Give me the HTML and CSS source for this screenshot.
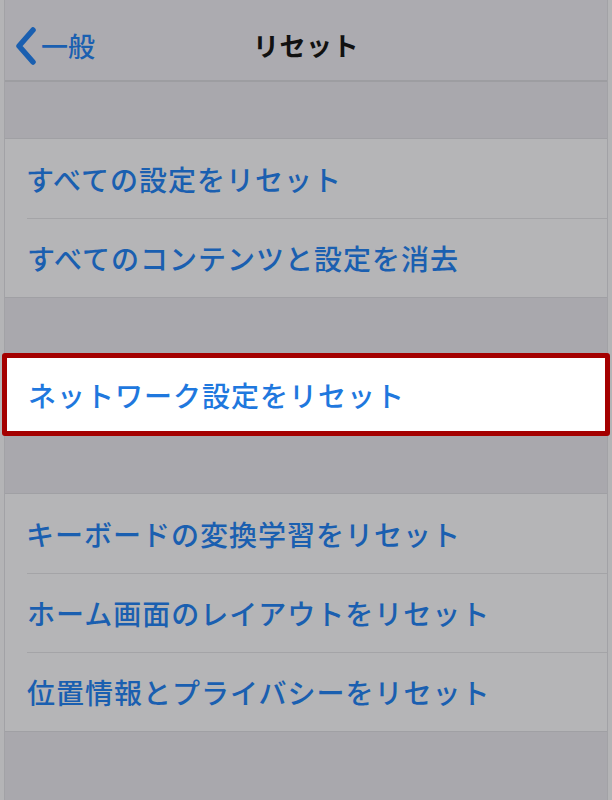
FILE: index.html
```html
<!DOCTYPE html>
<html lang="ja">
<head>
    <meta charset="UTF-8">
    <meta name="viewport" content="width=device-width, initial-scale=1.0">
    <title>リセット</title>
    <link rel="stylesheet" href="styles.css">
</head>
<body>
    <div class="screen">
        <div class="navbar">
            <div class="back">
                <svg class="chevron" width="24" height="38" viewBox="0 0 24 38">
                    <path d="M19 3 L5 19 L19 35" fill="none" stroke="#1a5fb0" stroke-width="5.5" stroke-linecap="round" stroke-linejoin="round"/>
                </svg>
                <span>一般</span>
            </div>
            <div class="nav-title">リセット</div>
        </div>
        <div class="spacer first"></div>
        <div class="group">
            <div class="row">すべての設定をリセット</div>
            <div class="row">すべてのコンテンツと設定を消去</div>
        </div>
        <div class="spacer"></div>
        <div class="highlight">
            <div class="row">ネットワーク設定をリセット</div>
        </div>
        <div class="spacer"></div>
        <div class="group">
            <div class="row">キーボードの変換学習をリセット</div>
            <div class="row">ホーム画面のレイアウトをリセット</div>
            <div class="row">位置情報とプライバシーをリセット</div>
        </div>
    </div>
</body>
</html>
```

FILE: styles.css
```css
* {
    margin: 0;
    padding: 0;
    box-sizing: border-box;
}
body {
    font-family: "Noto Sans CJK JP", "Noto Sans", sans-serif;
    background-color: #b4b4b6;
    width: 612px;
    height: 800px;
    overflow: hidden;
}
.screen {
    margin: 0 4px;
    height: 800px;
    background-color: #a9a8ad;
    border-left: 1px solid #a2a2a6;
    border-right: 1px solid #a2a2a6;
}
.navbar {
    position: relative;
    height: 82px;
    background-color: #acabb0;
    border-bottom: 2px solid #9d9da1;
    display: flex;
    align-items: center;
    justify-content: center;
}
.back {
    position: absolute;
    left: 9px;
    top: 26px;
    display: flex;
    align-items: center;
    gap: 3px;
    color: #1a5fb0;
    font-size: 27px;
    font-weight: 500;
}
.nav-title {
    font-size: 26px;
    font-weight: 700;
    letter-spacing: 0.5px;
    color: #111;
    margin-top: 8px;
}
.spacer {
    height: 55px;
}
.spacer.first {
    height: 56px;
}
.group {
    background-color: #b5b5b7;
    border-top: 1px solid #a0a0a4;
    border-bottom: 1px solid #a0a0a4;
}
.row {
    height: 79px;
    display: flex;
    align-items: center;
    padding-left: 21px;
    font-size: 28px;
    font-weight: 500;
    letter-spacing: 1px;
    color: #1a5fb0;
}
.group .row + .row {
    border-top: 1px solid #a4a4a7;
    margin-left: 22px;
    padding-left: 0;
}
.highlight {
    margin: 0 -3px;
    background-color: #fff;
    border: 5px solid #a40000;
    border-radius: 3px;
}
.highlight .row {
    height: 73px;
    padding-left: 21px;
    color: #1f78de;
}
.group:last-child {
    margin-top: 2px;
}
```
